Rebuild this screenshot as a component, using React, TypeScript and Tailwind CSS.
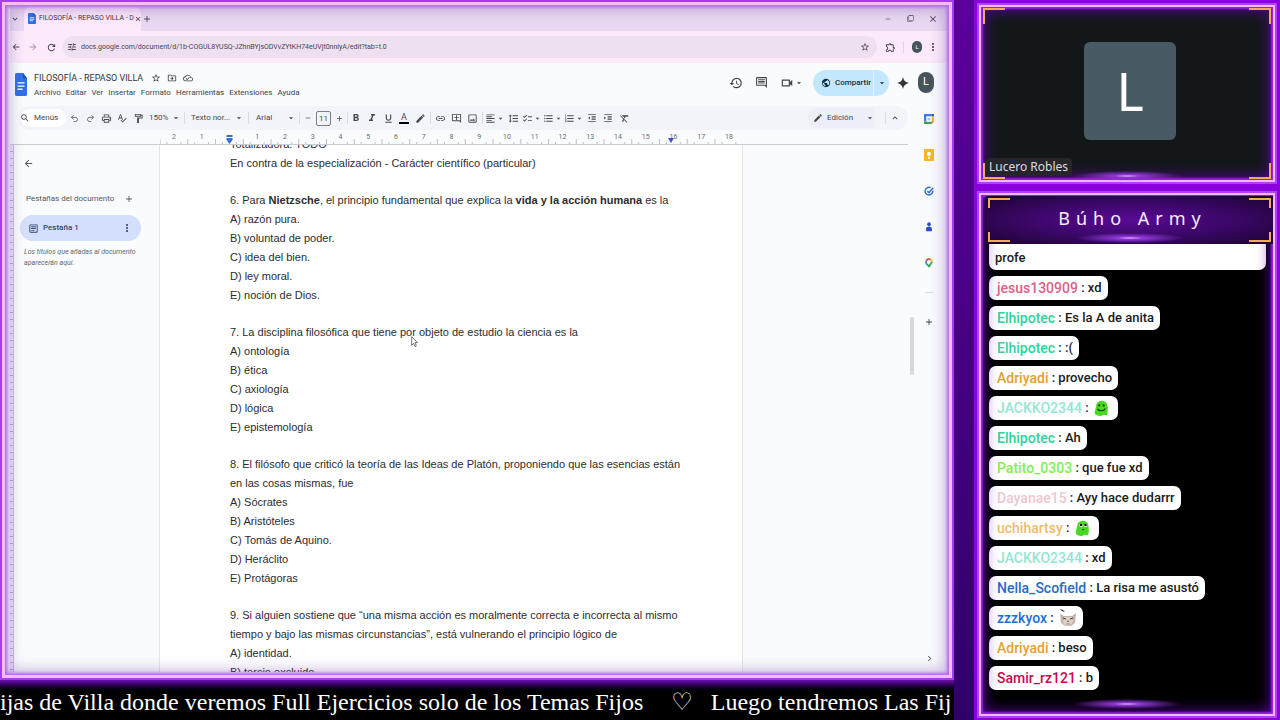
import React from 'react';
import {
  MdAdd,
  MdArrowBack,
  MdArrowDropDown,
  MdArrowForward,
  MdChecklist,
  MdChevronRight,
  MdClose,
  MdExpandLess,
  MdExpandMore,
  MdFilterNone,
  MdFormatAlignLeft,
  MdFormatBold,
  MdFormatClear,
  MdFormatIndentDecrease,
  MdFormatIndentIncrease,
  MdFormatItalic,
  MdFormatLineSpacing,
  MdFormatListBulleted,
  MdFormatListNumbered,
  MdFormatUnderlined,
  MdHistory,
  MdLink,
  MdMode,
  MdMoreVert,
  MdOutlineAddComment,
  MdOutlineArticle,
  MdOutlineCloudDone,
  MdOutlineComment,
  MdOutlineDriveFileMove,
  MdOutlineExtension,
  MdOutlineFormatPaint,
  MdOutlineImage,
  MdOutlinePrint,
  MdOutlineVideocam,
  MdPublic,
  MdRefresh,
  MdRemove,
  MdSearch,
  MdSpellcheck,
  MdStarBorder,
  MdTune,
} from 'react-icons/md';
import { Redo2, Undo2 } from 'lucide-react';

type Emote = 'smile' | 'stare' | 'cat';

type Message = {
  user: string;
  color: string;
  text?: string;
  emote?: Emote;
};

const messages: Message[] = [
  { user: 'jesus130909', color: 'text-[#dc6088]', text: 'xd' },
  { user: 'Elhipotec', color: 'text-[#2fd3a2]', text: 'Es la A de anita' },
  { user: 'Elhipotec', color: 'text-[#2fd3a2]', text: ':(' },
  { user: 'Adriyadi', color: 'text-[#e8a02e]', text: 'provecho' },
  { user: 'JACKKO2344', color: 'text-[#95e6d2]', emote: 'smile' },
  { user: 'Elhipotec', color: 'text-[#2fd3a2]', text: 'Ah' },
  { user: 'Patito_0303', color: 'text-[#82f04e]', text: 'que fue xd' },
  { user: 'Dayanae15', color: 'text-[#f0c6d2]', text: 'Ayy hace dudarrr' },
  { user: 'uchihartsy', color: 'text-[#efbc6c]', emote: 'stare' },
  { user: 'JACKKO2344', color: 'text-[#95e6d2]', text: 'xd' },
  { user: 'Nella_Scofield', color: 'text-[#2a6cc4]', text: 'La risa me asustó' },
  { user: 'zzzkyox', color: 'text-[#1c6fd6]', emote: 'cat' },
  { user: 'Adriyadi', color: 'text-[#e8a02e]', text: 'beso' },
  { user: 'Samir_rz121', color: 'text-[#c30a50]', text: 'b' },
];

const questions: React.ReactNode[][] = [
  ['Totalizadora: TODO', 'En contra de la especialización - Carácter científico (particular)'],
  [
    <>
      6. Para <b>Nietzsche</b>, el principio fundamental que explica la <b>vida y la acción humana</b> es la
    </>,
    'A) razón pura.',
    'B) voluntad de poder.',
    'C) idea del bien.',
    'D) ley moral.',
    'E) noción de Dios.',
  ],
  [
    '7. La disciplina filosófica que tiene por objeto de estudio la ciencia es la',
    'A) ontología',
    'B) ética',
    'C) axiología',
    'D) lógica',
    'E) epistemología',
  ],
  [
    '8. El filósofo que criticó la teoría de las Ideas de Platón, proponiendo que las esencias están',
    'en las cosas mismas, fue',
    'A) Sócrates',
    'B) Aristóteles',
    'C) Tomás de Aquino.',
    'D) Heráclito',
    'E) Protágoras',
  ],
  [
    '9. Si alguien sostiene que “una misma acción es moralmente correcta e incorrecta al mismo',
    'tiempo y bajo las mismas circunstancias”, está vulnerando el principio lógico de',
    'A) identidad.',
    'B) tercio excluido.',
  ],
];

const DocsLogo = ({ className }: { className: string }) => (
  <svg viewBox="0 0 12 22" preserveAspectRatio="none" className={className}>
    <path d="M1.500 0H8l4 5v15.500a1.500 1.500 0 0 1-1.500 1.500h-9A1.500 1.500 0 0 1 0 20.500v-19A1.500 1.500 0 0 1 1.500 0z" fill="#2f70e8" />
    <path d="M8 0l4 5H8z" fill="#1b50b8" />
    <path d="M2.500 9.500h7M2.500 12.500h7M2.500 15.500h5" stroke="#fff" strokeWidth="1.300" />
  </svg>
);

const Chrome = () => (
  <div className="bg-[#fce9fa]">
    <div className="flex h-[25px] items-center bg-[#e8d9f1] pr-1">
      <button aria-label="Buscar pestañas" className="mr-1 flex w-[10px] justify-center text-[#4a4452]">
        <MdExpandMore size={10} />
      </button>
      <div className="flex h-full w-[117px] items-center rounded-t-lg bg-[#fce9fa] pl-1">
        <DocsLogo className="h-[11px] w-2 shrink-0" />
        <span className="ml-[3px] flex-1 whitespace-nowrap text-[7px] text-[#3a3440]">FILOSOFÍA - REPASO VILLA - D</span>
        <button aria-label="Cerrar pestaña" className="mr-1 text-[#3a3440]">
          <MdClose size={8} />
        </button>
      </div>
      <button aria-label="Nueva pestaña" className="ml-px text-[#4a4452]">
        <MdAdd size={10} />
      </button>
      <div className="ml-auto flex items-center text-[#4a4452]">
        <button aria-label="Minimizar" className="flex w-[23px] justify-center">
          <MdRemove size={8} />
        </button>
        <button aria-label="Restaurar" className="flex w-[23px] justify-center">
          <MdFilterNone size={7} />
        </button>
        <button aria-label="Cerrar" className="flex w-[22px] justify-center">
          <MdClose size={10} />
        </button>
      </div>
    </div>
    <div className="flex h-8 items-center pr-1 text-[#4a4452]">
      <button aria-label="Atrás" className="flex w-[11px] justify-center">
        <MdArrowBack size={10} />
      </button>
      <button aria-label="Adelante" className="flex w-[23px] justify-center text-[#9b93a3]">
        <MdArrowForward size={10} />
      </button>
      <button aria-label="Recargar" className="mr-[5px] flex w-[14px] justify-center">
        <MdRefresh size={11} />
      </button>
      <div className="flex h-[22px] flex-1 items-center rounded-full bg-[#eee0f1] pl-1 pr-[7px]">
        <MdTune size={10} />
        <input
          aria-label="Dirección"
          className="ml-1 flex-1 bg-transparent text-[7px] text-[#4b4353] outline-none"
          defaultValue="docs.google.com/document/d/1b-COGUL8YUSQ-JZhnBYjsODVvZYtKH74eUVjt0nniyA/edit?tab=t.0"
        />
        <button aria-label="Marcador">
          <MdStarBorder size={10} />
        </button>
      </div>
      <button aria-label="Extensiones" className="flex w-[26px] justify-center">
        <MdOutlineExtension size={11} />
      </button>
      <span className="h-3 w-px bg-[#e3cfe6]" />
      <button aria-label="Perfil" className="ml-2 h-3 w-[10px] rounded-full bg-[#46555c] text-[6px] leading-3 text-white">
        L
      </button>
      <button aria-label="Más" className="flex w-[22px] justify-center">
        <MdMoreVert size={12} />
      </button>
    </div>
  </div>
);

const menus = ['Archivo', 'Editar', 'Ver', 'Insertar', 'Formato', 'Herramientas', 'Extensiones', 'Ayuda'];

const DocsHeader = () => (
  <header className="flex h-[43px] items-center pl-[5px] pr-[14px] text-[#40444a]">
    <DocsLogo className="h-[23px] w-3" />
    <div className="ml-[7px]">
      <div className="flex items-center">
        <h1 className="whitespace-nowrap text-[9px] leading-4 text-[#33363a]">FILOSOFÍA - REPASO VILLA</h1>
        <div className="ml-2 flex gap-[6px]">
          <MdStarBorder size={10} />
          <MdOutlineDriveFileMove size={10} />
          <MdOutlineCloudDone size={10} />
        </div>
      </div>
      <nav className="flex gap-[5px] text-[8px] leading-[14px]">
        {menus.map((menu) => (
          <button key={menu}>{menu}</button>
        ))}
      </nav>
    </div>
    <div className="ml-auto flex items-center pb-1">
      <button aria-label="Historial" className="flex w-[25px] justify-center">
        <MdHistory size={14} />
      </button>
      <button aria-label="Comentarios" className="flex w-[25px] justify-center">
        <MdOutlineComment size={13} />
      </button>
      <button aria-label="Reunión" className="ml-[6px] flex items-center">
        <MdOutlineVideocam size={14} />
        <MdArrowDropDown size={10} />
      </button>
      <div className="ml-[9px] flex h-[26px] items-center rounded-full bg-[#c3e7fd] text-[#12303f]">
        <button className="flex h-full items-center gap-1 pl-2 pr-[2px] text-[8px] font-medium">
          <MdPublic size={10} />
          Compartir
        </button>
        <button aria-label="Opciones para compartir" className="flex h-full w-4 items-center justify-center border-l border-[#e6f5fe]">
          <MdArrowDropDown size={10} />
        </button>
      </div>
      <button aria-label="Gemini" className="ml-2">
        <svg viewBox="0 0 24 24" className="size-3" fill="#2f3336">
          <path d="M12 0c1 7 5 11 12 12-7 1-11 5-12 12-1-7-5-11-12-12 7-1 11-5 12-12z" />
        </svg>
      </button>
      <button aria-label="Cuenta" className="ml-[9px] h-[21px] w-4 rounded-full bg-[#46555c] text-[11px] text-white">
        L
      </button>
    </div>
  </header>
);

const Tool = ({ label, children }: { label: string; children: React.ReactNode }) => (
  <button aria-label={label} className="flex w-4 items-center justify-center">
    {children}
  </button>
);

const MenuTool = ({ label, children }: { label: string; children: React.ReactNode }) => (
  <button aria-label={label} className="flex w-[21px] items-center justify-center">
    {children}
    <MdArrowDropDown size={9} />
  </button>
);

const Separator = () => <span className="h-3 w-px bg-[#d9dce1]" />;

const Picker = ({ label, value, className }: { label: string; value: string; className: string }) => (
  <label className={`flex items-center ${className}`}>
    <select aria-label={label} className="min-w-0 flex-1 appearance-none bg-transparent text-[8px] outline-none">
      <option>{value}</option>
    </select>
    <MdArrowDropDown size={10} />
  </label>
);

const Toolbar = () => (
  <div className="ml-2 mr-10 flex h-6 items-center rounded-full bg-[#f2f4f9] pl-[2px] text-[#45494e]">
    <button className="flex h-[18px] w-[46px] items-center gap-1 rounded-full bg-white text-[8px]">
      <MdSearch size={10} />
      Menús
    </button>
    <Tool label="Deshacer"><Undo2 size={9} /></Tool>
    <Tool label="Rehacer"><Redo2 size={9} /></Tool>
    <Tool label="Imprimir"><MdOutlinePrint size={11} /></Tool>
    <Tool label="Ortografía"><MdSpellcheck size={10} /></Tool>
    <Tool label="Copiar formato"><MdOutlineFormatPaint size={11} /></Tool>
    <Picker label="Zoom" value="150%" className="ml-[3px] w-8" />
    <span className="w-[3px]" />
    <Separator />
    <Picker label="Estilo" value="Texto nor..." className="ml-[6px] w-[53px]" />
    <span className="w-1" />
    <Separator />
    <Picker label="Fuente" value="Arial" className="ml-[7px] w-10" />
    <span className="w-[3px]" />
    <Separator />
    <Tool label="Reducir tamaño"><MdRemove size={8} /></Tool>
    <input
      aria-label="Tamaño de fuente"
      defaultValue="11"
      className="h-[15px] w-[15px] rounded-[2px] border border-[#7b7f85] bg-transparent text-center text-[8px]"
    />
    <Tool label="Aumentar tamaño"><MdAdd size={9} /></Tool>
    <Separator />
    <Tool label="Negrita"><MdFormatBold size={12} /></Tool>
    <Tool label="Cursiva"><MdFormatItalic size={12} /></Tool>
    <Tool label="Subrayado"><MdFormatUnderlined size={11} /></Tool>
    <Tool label="Color de texto">
      <span className="w-[10px] border-b-2 border-black text-[9px] leading-[10px]">A</span>
    </Tool>
    <Tool label="Resaltado"><MdMode size={11} /></Tool>
    <span className="w-[2px]" />
    <Separator />
    <span className="w-px" />
    <Tool label="Enlace"><MdLink size={11} /></Tool>
    <Tool label="Añadir comentario"><MdOutlineAddComment size={11} /></Tool>
    <Tool label="Imagen"><MdOutlineImage size={11} /></Tool>
    <span className="w-[2px]" />
    <Separator />
    <span className="w-px" />
    <MenuTool label="Alineación"><MdFormatAlignLeft size={11} /></MenuTool>
    <Tool label="Interlineado"><MdFormatLineSpacing size={11} /></Tool>
    <MenuTool label="Lista de control"><MdChecklist size={11} /></MenuTool>
    <MenuTool label="Viñetas"><MdFormatListBulleted size={11} /></MenuTool>
    <MenuTool label="Numeración"><MdFormatListNumbered size={11} /></MenuTool>
    <Tool label="Reducir sangría"><MdFormatIndentDecrease size={10} /></Tool>
    <Tool label="Aumentar sangría"><MdFormatIndentIncrease size={10} /></Tool>
    <Tool label="Borrar formato"><MdFormatClear size={11} /></Tool>
    <div className="ml-auto flex h-5 items-center rounded-l-full bg-[#eceff6] pl-[5px]">
      <MdMode size={10} />
      <Picker label="Modo" value="Edición" className="ml-1 w-12" />
    </div>
    <span className="w-[10px]" />
    <Separator />
    <button aria-label="Ocultar menús" className="ml-1 mr-2">
      <MdExpandLess size={10} />
    </button>
  </div>
);

const STEP = 27.75;

const Ruler = () => (
  <div className="mr-2 border-b border-[#c9ccd1]">
    <svg viewBox="0 0 582 14" className="ml-[150px] block h-[14px] w-[582px]">
      {Array.from({ length: 84 }, (_, i) => {
        const x = (i * STEP) / 4;
        const tall = i % 4 === 0;
        return (i + 2) % 4 === 0 ? null : (
          <path key={i} d={`M${x} ${tall ? 9 : 12}V14`} stroke="#a3a7ad" strokeWidth="0.700" />
        );
      })}
      {Array.from({ length: 21 }, (_, i) => i - 2).map((n) =>
        n === 0 ? null : (
          <text key={n} x={69.500 + n * STEP} y={9} textAnchor="middle" fontSize="7" fill="#686c72">
            {Math.abs(n)}
          </text>
        )
      )}
      <path d="M66.500 5h6v2h-6zM66.500 8h6v2l-3 4-3-4z" fill="#3b6fe0" />
      <path d="M508 8h6l-3 5z" fill="#3b4fd0" />
    </svg>
  </div>
);

const Outline = () => (
  <aside className="flex w-[150px] shrink-0 border-r border-[#e3e6ea] text-[#54585e]">
    <span className="w-1 border-r border-[#d0b4ea] bg-[repeating-linear-gradient(#f0e6fa_0_6px,#c0a8dc_6px_7px)]" />
    <div className="pl-2 pt-2">
      <button aria-label="Cerrar panel" className="ml-px flex h-5 items-center">
        <MdArrowBack size={11} />
      </button>
      <div className="ml-1 mt-4 flex h-5 w-[108px] items-center justify-between text-[8px]">
        <span className="whitespace-nowrap">Pestañas del documento</span>
        <button aria-label="Añadir pestaña" className="shrink-0">
          <MdAdd size={10} />
        </button>
      </div>
      <div className="-ml-[2px] mt-[6px] flex h-[26px] w-[121px] items-center rounded-full bg-[#d3dffb] pl-2 pr-2 text-[#31456e]">
        <MdOutlineArticle size={11} />
        <span className="ml-1 text-[8px] font-medium">Pestaña 1</span>
        <button aria-label="Opciones de pestaña" className="ml-auto">
          <MdMoreVert size={12} />
        </button>
      </div>
      <p className="ml-[2px] mt-[6px] whitespace-nowrap text-[7px] italic leading-[11px] text-[#64686e]">
        Los títulos que añadas al documento
        <br />
        aparecerán aquí.
      </p>
    </div>
  </aside>
);

const SidePanel = () => (
  <div className="flex w-8 shrink-0 flex-col items-center pb-2 pr-[6px] pt-[7px]">
    <div className="flex flex-col items-center gap-6">
      <svg viewBox="0 0 12 12" className="h-3 w-[10px]">
        <path d="M0 0h9v3H3v6H0z" fill="#3d7de8" />
        <path d="M9 0h3v3H9z" fill="#1f5fcf" />
        <path d="M9 3h3v6H9z" fill="#f4bc1c" />
        <path d="M0 9h9v3H0z" fill="#37a556" />
        <path d="M9 9h3l-3 3z" fill="#e5483b" />
        <path d="M3 3h6v6H3z" fill="#fff" />
        <path d="M5 4.500v3M7 4.500v3" stroke="#3d7de8" strokeWidth="0.800" />
      </svg>
      <svg viewBox="0 0 12 12" className="h-3 w-[10px]" preserveAspectRatio="none">
        <rect width="12" height="12" rx="1" fill="#f3b91e" />
        <circle cx="6" cy="5" r="2.300" fill="#fff" />
        <path d="M5 8h2v2H5z" fill="#fff" />
      </svg>
      <svg viewBox="0 0 12 12" className="h-3 w-[10px]" fill="none" stroke="#2c6fe3">
        <path d="M10.500 5.500A4.600 4.600 0 1 1 8 2" strokeWidth="1.800" />
        <path d="M4 6l2 2 5-6" strokeWidth="1.800" />
      </svg>
      <svg viewBox="0 0 12 12" className="h-3 w-[10px]" fill="#2450c0">
        <circle cx="6" cy="2.600" r="2.200" />
        <path d="M2.500 11V8.500a3.500 3 0 0 1 7 0V11z" />
      </svg>
      <svg viewBox="0 0 12 12" className="h-3 w-[10px]" fill="none" strokeWidth="2.200">
        <path d="M3 7a3.200 3.200 0 0 1-.2-3.500" stroke="#3d7de8" />
        <path d="M2.800 3.500A3.600 3.600 0 0 1 8 1.800" stroke="#e5483b" />
        <path d="M8 1.800a3.200 3.200 0 0 1 1.400 3" stroke="#f4bc1c" />
        <path d="M9.300 4.800C9 7 6.500 8 6 11 5.500 8.500 4 8 3 7" stroke="#37a556" />
      </svg>
    </div>
    <span className="mt-[23px] h-px w-[9px] bg-[#dadde2]" />
    <button aria-label="Complementos" className="mt-6 text-[#3f4348]">
      <MdAdd size={10} />
    </button>
    <button aria-label="Mostrar panel" className="mt-auto text-[#6b6f75]">
      <MdChevronRight size={11} />
    </button>
  </div>
);

const Browser = () => (
  <section className="relative flex min-h-0 flex-1 flex-col overflow-hidden border-2 border-[#a43cf0] bg-[#f9fbfd] pb-[6px] pl-2 pr-1 pt-1 font-['Roboto',sans-serif]">
    <Chrome />
    <DocsHeader />
    <div className="flex min-h-0 flex-1">
      <div className="flex min-w-0 flex-1 flex-col">
        <div className="-mr-8">
          <Toolbar />
        </div>
        <Ruler />
        <div className="flex min-h-0 flex-1">
          <Outline />
          <article className="w-[583px] shrink-0 overflow-hidden border-r border-[#e3e6ea] bg-white pl-[70px] font-['Liberation_Sans',sans-serif]">
            <div className="-mt-[10px] flex flex-col gap-[18px] whitespace-nowrap text-[11px] leading-[19px] text-[#2c2c2e]">
              {questions.map((lines, i) => (
                <div key={i}>
                  {lines.map((line, j) => (
                    <p key={j}>{line}</p>
                  ))}
                </div>
              ))}
            </div>
          </article>
          <div className="ml-auto flex w-2 flex-col pt-[172px]">
            <span className="ml-[2px] h-[58px] w-1 rounded-full bg-[#d6d8dc]" />
          </div>
        </div>
      </div>
      <SidePanel />
    </div>

    {/* Mouse pointer */}
    <svg viewBox="0 0 12 18" className="absolute left-[409px] top-[334px] h-3 w-2">
      <path d="M1 1v13l3-3 2 5 2-1-2-5h4z" fill="#fff" stroke="#555" strokeWidth="1.200" />
    </svg>

    {/* Neon glow over the window edges */}
    <div className="pointer-events-none absolute inset-0 shadow-[inset_0_0_0_3px_#f6baff,inset_0_0_3px_5px_#b368f0,inset_0_0_14px_8px_rgba(110,60,160,0.350)]" />
  </section>
);

const Corners = ({ inset, height }: { inset: string; height: string }) => (
  <div className={`pointer-events-none absolute flex flex-col justify-between ${inset}`}>
    <div className="flex justify-between">
      <span className={`w-[22px] border-l-2 border-t-2 border-[#f0ab58] ${height}`} />
      <span className={`w-[22px] border-r-2 border-t-2 border-[#f0ab58] ${height}`} />
    </div>
    <div className="flex justify-between">
      <span className={`w-[22px] border-b-2 border-l-2 border-[#f0ab58] ${height}`} />
      <span className={`w-[22px] border-b-2 border-r-2 border-[#f0ab58] ${height}`} />
    </div>
  </div>
);

const Flare = () => (
  <span className="pointer-events-none absolute bottom-0 left-1/2 h-3 w-32 -translate-x-1/2 bg-[radial-gradient(ellipse_at_50%_50%,#eab0ff_0%,#9038d8_14%,transparent_60%)]" />
);

const Glow = () => (
  <div className="pointer-events-none absolute inset-0 shadow-[inset_0_0_0_2px_#f2b8ff,inset_0_0_2px_4px_#9a20f0,inset_0_0_14px_5px_rgba(110,0,200,0.750)]" />
);

const Camera = () => (
  <section className="relative flex h-[181px] items-center justify-center border-2 border-[#b040ff] bg-[#14171a] pb-[6px] pl-[6px]">
    <Glow />
    <Flare />
    <div className="flex h-[98px] w-[92px] items-center justify-center rounded-md bg-[#485a63] font-['Noto_Sans',sans-serif] text-[52px] text-white">
      L
    </div>
    <span className="absolute bottom-[6px] left-[6px] rounded bg-[#25252b] px-1 font-['Noto_Sans',sans-serif] text-xs leading-[18px] text-[#dcdce0]">
      Lucero Robles
    </span>
    <Corners inset="inset-x-1 inset-y-[3px]" height="h-4" />
  </section>
);

const EmoteIcon = ({ name }: { name: Emote }) => {
  if (name === 'cat') {
    return (
      <svg viewBox="0 0 18 18" className="ml-[2px] h-[18px] w-[18px]">
        <path d="M1 5l4 2h8l4-3-1 10-4 3H6l-4-3z" fill="#c4b6ad" />
        <path d="M5 8h8l1 5-4 4H7l-3-3z" fill="#ddd2ca" />
        <path d="M1 0l3 1 2 2-3-1z" fill="#222" />
        <path d="M4 9l3 1M14 9l-3 1" stroke="#54463f" strokeWidth="1.200" />
        <path d="M8 12h2l-1 1zM7 15h4" stroke="#8a6a62" fill="#8a6a62" strokeWidth="0.700" />
      </svg>
    );
  }
  return (
    <svg viewBox="0 0 16 18" className="ml-[2px] mr-1 h-4 w-[14px]">
      <path d="M3 4c2-4 10-5 12 1 1 4 1 8 0 12-2 1-3-1-5 0-2 2-5 1-7 0-3-1-2-2-2-4z" fill="#48d820" />
      {name === 'smile' ? (
        <>
          <circle cx="6" cy="6" r="1.200" fill="#103a08" />
          <circle cx="11" cy="6" r="1.200" fill="#103a08" />
          <path d="M4 10c2 3 7 3 9-0.500" fill="none" stroke="#103a08" strokeWidth="1.300" />
        </>
      ) : (
        <>
          <circle cx="7" cy="6" r="2" fill="#fff" />
          <circle cx="12" cy="6" r="2" fill="#fff" />
          <circle cx="7" cy="5.500" r="1.500" fill="#111" />
          <circle cx="12" cy="5.500" r="1.500" fill="#111" />
          <path d="M8 11h2.500" stroke="#103a08" strokeWidth="1" />
        </>
      )}
    </svg>
  );
};

const Chat = () => (
  <section className="relative flex min-h-0 flex-1 flex-col border-2 border-[#b040ff] bg-black px-[10px] pt-[3px]">
    <header className="relative z-10 -ml-[3px] -mr-2 flex h-12 shrink-0 items-center justify-center bg-[radial-gradient(ellipse_at_center,#5a0a96_0%,#3b0768_50%,#1b0330_100%)]">
      <h2 className="pb-1 pl-[6px] font-['Noto_Sans',sans-serif] text-lg tracking-[6px] text-[#f8ecff]">Búho Army</h2>
      <Flare />
      <Corners inset="inset-[2px]" height="h-[10px]" />
    </header>
    <div className="flex flex-col items-start gap-[6px] font-['Roboto',sans-serif] text-[13px] font-medium leading-6 text-[#1a1a1c]">
      <p className="w-[277px] rounded-b-[7px] bg-white pl-[6px] pt-[2px]">profe</p>
      {messages.map((m, i) => (
        <p key={i} className="flex h-6 items-center whitespace-pre rounded-[7px] bg-white pl-2 pr-[6px]">
          <span className={`text-sm ${m.color}`}>{m.user}</span>
          <span> : {m.text}</span>
          {m.emote && <EmoteIcon name={m.emote} />}
        </p>
      ))}
    </div>
    <Glow />
    <div className="relative mt-1 h-4">
      <Flare />
    </div>
  </section>
);

const Ticker = () => (
  <footer className="flex h-10 shrink-0 items-center overflow-hidden whitespace-pre bg-linear-to-b from-[#6a10b0] via-black via-30% to-black pt-1 font-['Liberation_Serif',serif] text-2xl text-white">
    <span>ijas de Villa donde veremos Full Ejercicios solo de los Temas Fijos</span>
    <span className="ml-7 font-['DejaVu_Sans',sans-serif]">♡</span>
    <span className="ml-[18px]">Luego tendremos Las Fij</span>
  </footer>
);

const App: React.FC = () => {
  return (
    <div className="flex h-screen w-full overflow-hidden bg-[#8400dc]">
      <main className="flex min-w-0 flex-1 flex-col">
        <Browser />
        <Ticker />
      </main>
      <div className="w-5 shrink-0 bg-linear-to-b from-[#5c009c] to-[#30006a]" />
      <div className="flex w-[306px] shrink-0 flex-col gap-[7px] bg-[#8a00de] px-[3px] pb-[2px] pt-[3px]">
        <Camera />
        <Chat />
      </div>
    </div>
  );
};

export default App;
